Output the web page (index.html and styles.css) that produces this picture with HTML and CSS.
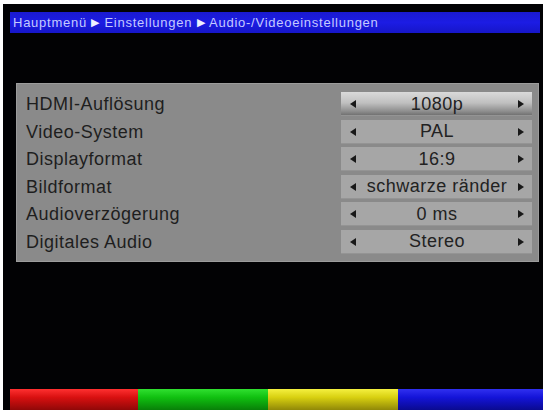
FILE: index.html
```html
<!DOCTYPE html>
<html>
<head>
<meta charset="utf-8">
<link rel="stylesheet" href="styles.css">
</head>
<body>
<div class="screen">
  <div class="header">Hauptmenü <span class="sep">▶</span> Einstellungen <span class="sep">▶</span> Audio-/Videoeinstellungen</div>
  <div class="panel">
    <div class="row active"><div class="label">HDMI-Auflösung</div><div class="value"><span class="arr l"></span><span class="txt">1080p</span><span class="arr r"></span></div></div>
    <div class="row"><div class="label">Video-System</div><div class="value"><span class="arr l"></span><span class="txt">PAL</span><span class="arr r"></span></div></div>
    <div class="row"><div class="label">Displayformat</div><div class="value"><span class="arr l"></span><span class="txt">16:9</span><span class="arr r"></span></div></div>
    <div class="row"><div class="label">Bildformat</div><div class="value"><span class="arr l"></span><span class="txt">schwarze ränder</span><span class="arr r"></span></div></div>
    <div class="row"><div class="label">Audioverzögerung</div><div class="value"><span class="arr l"></span><span class="txt">0 ms</span><span class="arr r"></span></div></div>
    <div class="row"><div class="label">Digitales Audio</div><div class="value"><span class="arr l"></span><span class="txt">Stereo</span><span class="arr r"></span></div></div>
  </div>
  <div class="spacer"></div>
  <div class="keys">
    <div class="key red"></div>
    <div class="key green"></div>
    <div class="key yellow"></div>
    <div class="key blue"></div>
  </div>
</div>
</body>
</html>
```

FILE: styles.css
```css
html, body {
  margin: 0;
  padding: 0;
  background: #ffffff;
  width: 546px;
  height: 410px;
  overflow: hidden;
}
.screen {
  margin: 4px 3px 0 3px;
  width: 540px;
  height: 406px;
  background: #020204;
  display: flex;
  flex-direction: column;
  font-family: "Liberation Sans", Arial, sans-serif;
}
.header {
  margin: 8px 3px 0 7px;
  height: 21px;
  background: linear-gradient(#1a1ad0, #1c1ce4 50%, #1616c8);
  color: #c4caff;
  font-size: 13px;
  line-height: 21px;
  padding-left: 3px;
  letter-spacing: 0.75px;
  white-space: nowrap;
}
.header .sep {
  font-size: 11px;
  color: #eef0ff;
  vertical-align: 1px;
}
.panel {
  margin: 50px 4px 0 13px;
  background: #8a8a8a;
  border: 1px solid #9c9c9c;
  padding: 8px 6px 4px 8px;
  display: flex;
  flex-direction: column;
}
.row {
  display: flex;
  align-items: flex-start;
  height: 27.5px;
}
.label {
  flex: 1;
  color: #1e1e1e;
  font-size: 18px;
  letter-spacing: 0.5px;
  line-height: 24px;
  padding-left: 1px;
}
.value {
  width: 191px;
  height: 24px;
  background: #a6a6a6;
  display: flex;
  align-items: center;
  color: #222;
  font-size: 18px;
  letter-spacing: 0.5px;
  box-shadow: inset 0 -1px 0 #949494;
}
.row.active .value {
  background: linear-gradient(#dadada, #c0c0c0 45%, #8e8e8e 80%, #6a6a6a);
}
.txt {
  flex: 1;
  text-align: center;
  white-space: nowrap;
}
.arr {
  width: 0;
  height: 0;
  border-top: 4px solid transparent;
  border-bottom: 4px solid transparent;
}
.arr.l {
  border-right: 6px solid #181818;
  margin-left: 9px;
}
.arr.r {
  border-left: 6px solid #181818;
  margin-right: 8px;
}
.spacer {
  flex: 1;
}
.keys {
  margin-left: 7px;
  height: 21px;
  display: flex;
}
.key {
  height: 21px;
}
.red {
  width: 128px;
  background: linear-gradient(#ff3030, #d81010 40%, #900808);
}
.green {
  width: 130px;
  background: linear-gradient(#30e030, #10c010 40%, #088008);
}
.yellow {
  width: 130px;
  background: linear-gradient(#f4f040, #d8d010 40%, #908808);
}
.blue {
  flex: 1;
  background: linear-gradient(#3030f0, #1414d8 40%, #0a0a90);
}
```
